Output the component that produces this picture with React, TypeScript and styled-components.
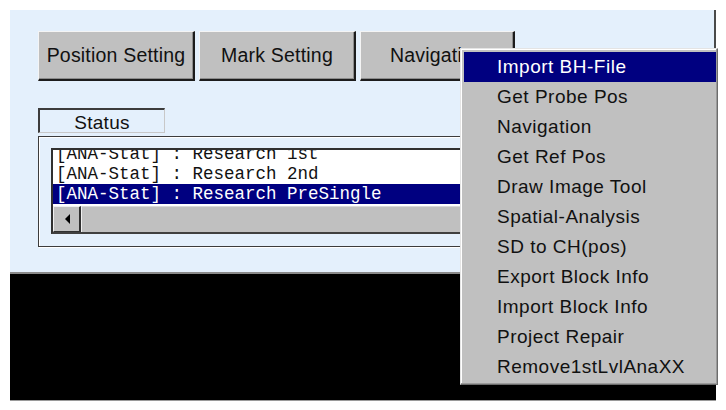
import React from "react";
import styled, { createGlobalStyle } from "styled-components";

const GlobalStyle = createGlobalStyle`
  html, body {
    margin: 0;
    padding: 0;
    background: #ffffff;
  }
  body {
    font-family: "Liberation Sans", Arial, sans-serif;
    color: #111;
  }
`;

const Page = styled.div`
  position: relative;
  width: 706px;
  padding: 10px;
`;

const Panel = styled.div`
  height: 262px;
  box-sizing: border-box;
  background: #e4f0fc;
  border-right: 2px solid #4a4a4a;
  padding: 21px 0 0 28px;
  display: flex;
  flex-direction: column;
  align-items: flex-start;
`;

const ButtonRow = styled.div`
  display: flex;
  gap: 4px;
`;

const ToolButton = styled.div<{ $width: number }>`
  width: ${(p) => p.$width}px;
  height: 50px;
  box-sizing: border-box;
  background: #c0c0c0;
  border-top: 1px solid #f4f4f4;
  border-left: 1px solid #f4f4f4;
  border-right: 2px solid #1c1c1c;
  border-bottom: 2px solid #1c1c1c;
  box-shadow: inset -1px -1px 0 #8c8c8c;
  display: flex;
  align-items: center;
  justify-content: center;
  font-size: 19.5px;
  letter-spacing: 0.2px;
  white-space: nowrap;
  overflow: hidden;
`;

const StatusLabel = styled.div`
  margin-top: 27px;
  width: 127px;
  height: 25px;
  box-sizing: border-box;
  border-top: 2px solid #3c3c3c;
  border-left: 2px solid #3c3c3c;
  border-right: 1px solid #c8c8c8;
  border-bottom: 1px solid #c8c8c8;
  padding-top: 3px;
  display: flex;
  align-items: center;
  justify-content: center;
  font-size: 19px;
  letter-spacing: 0.3px;
  line-height: 1;
`;

const GroupBox = styled.div`
  margin-top: 3px;
  align-self: stretch;
  margin-right: 14px;
  box-sizing: border-box;
  border: 1px solid #3c3c3c;
  box-shadow: inset 1px 1px 0 #ffffff, 1px 1px 0 #ffffff;
  padding: 11px 11px 12px 12px;
`;

const ListBox = styled.div`
  box-sizing: border-box;
  border-top: 2px solid #303030;
  border-left: 2px solid #303030;
  border-right: 2px solid #909090;
  border-bottom: 2px solid #404040;
  background: #ffffff;
  display: flex;
  flex-direction: column;
`;

const ListViewport = styled.div`
  height: 56px;
  overflow: hidden;
`;

const ListContent = styled.div`
  margin-top: -6px;
`;

const ListRow = styled.div<{ $selected?: boolean }>`
  height: 20px;
  line-height: 20px;
  padding-left: 3px;
  font-family: "Liberation Mono", "Courier New", monospace;
  font-size: 17.5px;
  white-space: pre;
  background: ${(p) => (p.$selected ? "#000080" : "transparent")};
  color: ${(p) => (p.$selected ? "#ffffff" : "#111")};
`;

const HScroll = styled.div`
  height: 26px;
  display: flex;
  background: #c0c0c0;
`;

const ScrollArrow = styled.div`
  width: 28px;
  box-sizing: border-box;
  background: #c0c0c0;
  border-top: 1px solid #f0f0f0;
  border-left: 1px solid #f0f0f0;
  border-right: 2px solid #303030;
  border-bottom: 1px solid #303030;
  padding-left: 3px;
  display: flex;
  align-items: center;
  justify-content: center;
`;

const Thumb = styled.div`
  flex: 1;
  box-sizing: border-box;
  border-left: 1px solid #f0f0f0;
  border-top: 1px solid #d8d8d8;
  background: #c0c0c0;
`;

const Divider = styled.div`
  height: 2px;
  background: #8a8a8a;
`;

const Screen = styled.div`
  height: 126px;
  background: #000000;
  border-bottom: 1px solid #9a9a9a;
`;

const PopupMenu = styled.div`
  position: absolute;
  left: 460px;
  top: 48px;
  width: 258px;
  height: 337px;
  box-sizing: border-box;
  background: #c0c0c0;
  border-top: 1px solid #e4e4e4;
  border-left: 1px solid #e4e4e4;
  border-right: 1px solid #6c6c6c;
  border-bottom: 1px solid #6c6c6c;
  box-shadow: inset -1px -1px 0 #9a9a9a, inset 1px 1px 0 #ffffff;
  padding: 3px 1px 0 3px;
`;

const MenuItem = styled.div<{ $active?: boolean }>`
  height: 30px;
  display: flex;
  align-items: center;
  padding-left: 33px;
  font-size: 19px;
  letter-spacing: 0.5px;
  white-space: nowrap;
  background: ${(p) => (p.$active ? "#000080" : "transparent")};
  color: ${(p) => (p.$active ? "#ffffff" : "#111")};
`;

const menuItems = [
  "Import BH-File",
  "Get Probe Pos",
  "Navigation",
  "Get Ref Pos",
  "Draw Image Tool",
  "Spatial-Analysis",
  "SD to CH(pos)",
  "Export Block Info",
  "Import Block Info",
  "Project Repair",
  "Remove1stLvlAnaXX",
];

const logLines = [
  "[ANA-Stat] : Research 1st",
  "[ANA-Stat] : Research 2nd",
  "[ANA-Stat] : Research PreSingle",
];

export default function App() {
  return (
    <>
      <GlobalStyle />
      <Page>
        <Panel>
          <ButtonRow>
            <ToolButton $width={157}>Position Setting</ToolButton>
            <ToolButton $width={157}>Mark Setting</ToolButton>
            <ToolButton $width={155}>Navigation</ToolButton>
          </ButtonRow>
          <StatusLabel>Status</StatusLabel>
          <GroupBox>
            <ListBox>
              <ListViewport>
                <ListContent>
                  {logLines.map((line, i) => (
                    <ListRow key={line} $selected={i === logLines.length - 1}>
                      {line}
                    </ListRow>
                  ))}
                </ListContent>
              </ListViewport>
              <HScroll>
                <ScrollArrow>
                  <svg width="6" height="10" viewBox="0 0 6 10">
                    <polygon points="5,0 0,5 5,10" fill="#000" />
                  </svg>
                </ScrollArrow>
                <Thumb />
              </HScroll>
            </ListBox>
          </GroupBox>
        </Panel>
        <Divider />
        <Screen />
        <PopupMenu>
          {menuItems.map((item, i) => (
            <MenuItem key={item} $active={i === 0}>
              {item}
            </MenuItem>
          ))}
        </PopupMenu>
      </Page>
    </>
  );
}
